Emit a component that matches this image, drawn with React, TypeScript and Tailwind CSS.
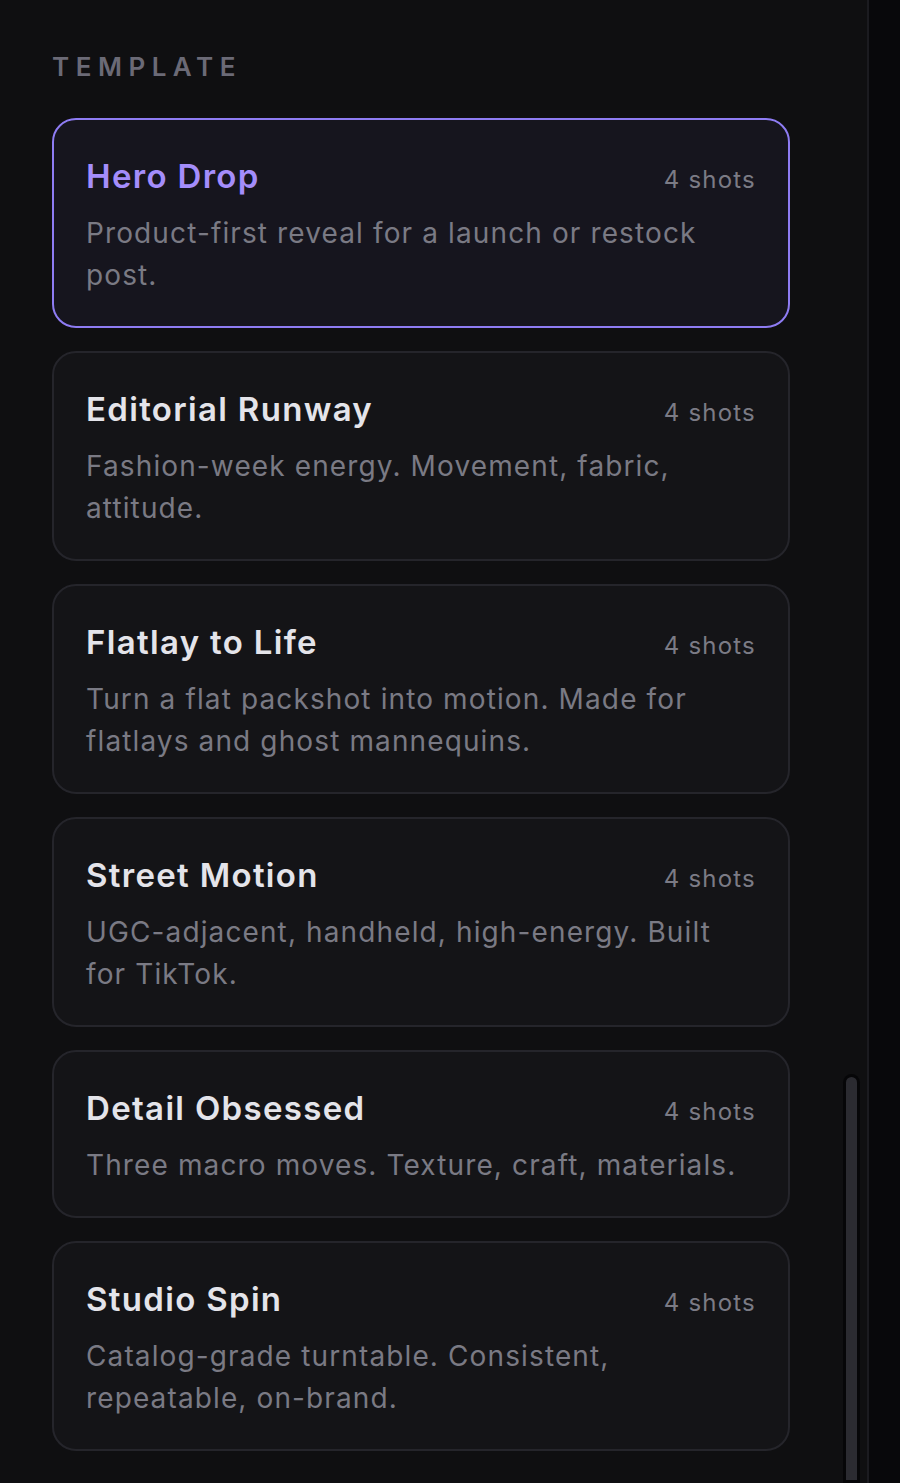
const templates = [
  {
    name: "Hero Drop",
    desc: "Product-first reveal for a launch or restock post.",
    shots: 4,
  },
  {
    name: "Editorial Runway",
    desc: "Fashion-week energy. Movement, fabric, attitude.",
    shots: 4,
  },
  {
    name: "Flatlay to Life",
    desc: "Turn a flat packshot into motion. Made for flatlays and ghost mannequins.",
    shots: 4,
  },
  {
    name: "Street Motion",
    desc: "UGC-adjacent, handheld, high-energy. Built for TikTok.",
    shots: 4,
  },
  {
    name: "Detail Obsessed",
    desc: "Three macro moves. Texture, craft, materials.",
    shots: 4,
  },
  {
    name: "Studio Spin",
    desc: "Catalog-grade turntable. Consistent, repeatable, on-brand.",
    shots: 4,
  },
];

function TemplateCard({
  name,
  desc,
  shots,
  selected,
}: {
  name: string;
  desc: string;
  shots: number;
  selected?: boolean;
}) {
  return (
    <button
      className={
        selected
          ? "w-full text-left rounded-[24px] border-2 border-[#8e7cf3] bg-[#16151e] pl-8 pr-8 pt-8 pb-[30px]"
          : "w-full text-left rounded-[24px] border-2 border-[#25252b] bg-[#141417] pl-8 pr-8 pt-8 pb-[30px]"
      }
    >
      <div className="flex items-start justify-between gap-4">
        <span
          className={
            selected
              ? "text-[33px] leading-[48px] font-semibold tracking-[0.04em] text-[#a48dfb]"
              : "text-[33px] leading-[48px] font-semibold tracking-[0.04em] text-[#e4e4ea]"
          }
        >
          {name}
        </span>
        <span className="mt-[10px] text-[24px] leading-[36px] tracking-[0.05em] text-[#7b7b85]">
          {shots} shots
        </span>
      </div>
      <p className="mt-3 text-[28px] leading-[42px] tracking-[0.04em] text-[#7a7a84]">
        {desc}
      </p>
    </button>
  );
}

export default function App() {
  return (
    <div
      className="flex h-[1483px] w-[900px] overflow-hidden bg-[#08080b]"
      style={{ fontFamily: "Inter, 'Noto Sans', sans-serif" }}
    >
      <aside className="relative w-[869px] shrink-0 border-r-2 border-[#1b1b20] bg-[#0f0f11]">
        <div className="pl-[52px] pr-[77px] pt-[47px]">
          <h2 className="text-[26px] leading-[39px] font-semibold uppercase tracking-[0.25em] text-[#6b6a76]">
            Template
          </h2>
          <div className="mt-[32px] flex flex-col gap-[23px]">
            {templates.map((t, i) => (
              <TemplateCard key={t.name} {...t} selected={i === 0} />
            ))}
          </div>
        </div>
        {/* scrollbar thumb */}
        <div className="absolute right-[7px] top-[1074px] bottom-0 w-[17px] rounded-t-full bg-[#060608] p-[3px]">
          <div className="h-full w-full rounded-t-full bg-[#2b2b31]" />
        </div>
      </aside>
    </div>
  );
}
